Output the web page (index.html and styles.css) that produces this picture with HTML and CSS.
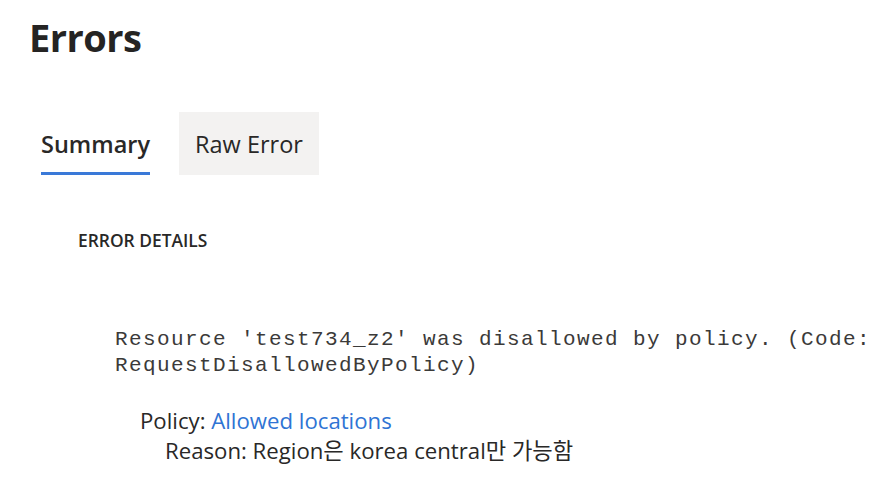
FILE: index.html
```html
<!DOCTYPE html>
<html>
<head>
<meta charset="utf-8">
<link rel="stylesheet" href="styles.css">
</head>
<body>
<div class="page">
  <h1 class="title">Errors</h1>
  <div class="tabs">
    <div class="tab tab-active"><span class="tab-label">Summary</span></div>
    <div class="tab tab-other"><span class="tab-label">Raw Error</span></div>
  </div>
  <div class="section">
    <div class="section-head">ERROR DETAILS</div>
    <div class="detail">
      <pre class="message">Resource 'test734_z2' was disallowed by policy. (Code:
RequestDisallowedByPolicy)</pre>
      <div class="policy">
        <div class="policy-line">Policy: <a class="link" href="#">Allowed locations</a></div>
        <div class="reason-line">Reason: Region은 korea central만 가능함</div>
      </div>
    </div>
  </div>
</div>
</body>
</html>
```
FILE: styles.css
```css
html, body {
  margin: 0;
  padding: 0;
  background: #ffffff;
}
body {
  font-family: "Open Sans", "Noto Sans CJK KR", sans-serif;
  color: #292827;
  overflow: hidden;
}
.page {
  padding: 0 0 0 29px;
}
.title {
  margin: 0;
  padding-top: 10px;
  font-size: 38px;
  font-weight: 700;
  line-height: 54px;
  letter-spacing: -0.5px;
  color: #252423;
}
.tabs {
  display: flex;
  margin-top: 48px;
  margin-left: -4px;
  gap: 13px;
}
.tab {
  height: 63px;
  padding: 0 16px;
  display: flex;
  align-items: center;
  box-sizing: border-box;
  font-size: 23.5px;
  position: relative;
}
.tab-active {
  font-weight: 600;
}
.tab-active::after {
  content: "";
  position: absolute;
  left: 16px;
  right: 16px;
  bottom: 0;
  height: 3px;
  background: #3a79d8;
}
.tab-other {
  background: #f3f2f1;
}
.section {
  padding-left: 49px;
}
.section-head {
  margin-top: 55px;
  font-size: 17.4px;
  font-weight: 600;
  line-height: 20px;
  color: #292827;
}
.detail {
  padding-left: 37px;
}
.message {
  margin: 77px 0 0 0;
  font-family: "Liberation Mono", monospace;
  font-size: 21px;
  letter-spacing: 1.4px;
  line-height: 26px;
  color: #3b3a39;
  white-space: pre;
}
.policy {
  margin-top: 27px;
  padding-left: 25px;
  font-size: 22.2px;
  line-height: 30px;
}
.link {
  color: #2f74d4;
  text-decoration: none;
}
.reason-line {
  padding-left: 25px;
}
```
